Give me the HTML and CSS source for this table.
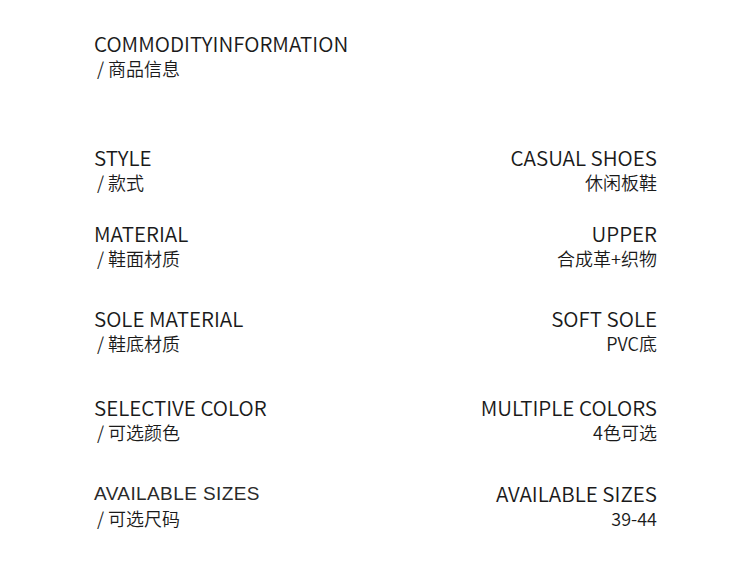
FILE: index.html
```html
<!DOCTYPE html>
<html>
<head>
<meta charset="utf-8">
<link rel="stylesheet" href="styles.css">
</head>
<body>
<div class="page">
  <header class="head">
    <div class="title">COMMODITYINFORMATION</div>
    <div class="sub">/ 商品信息</div>
  </header>
  <div class="rows">
    <div class="row r1">
      <div class="cell"><div class="title">STYLE</div><div class="sub">/ 款式</div></div>
      <div class="cell right"><div class="title">CASUAL SHOES</div><div class="sub">休闲板鞋</div></div>
    </div>
    <div class="row r2">
      <div class="cell"><div class="title">MATERIAL</div><div class="sub">/ 鞋面材质</div></div>
      <div class="cell right"><div class="title">UPPER</div><div class="sub">合成革+织物</div></div>
    </div>
    <div class="row r3">
      <div class="cell"><div class="title">SOLE MATERIAL</div><div class="sub">/ 鞋底材质</div></div>
      <div class="cell right"><div class="title">SOFT SOLE</div><div class="sub">PVC底</div></div>
    </div>
    <div class="row r4">
      <div class="cell"><div class="title">SELECTIVE COLOR</div><div class="sub">/ 可选颜色</div></div>
      <div class="cell right"><div class="title">MULTIPLE COLORS</div><div class="sub">4色可选</div></div>
    </div>
    <div class="row r5">
      <div class="cell"><div class="title alt">AVAILABLE SIZES</div><div class="sub">/ 可选尺码</div></div>
      <div class="cell right"><div class="title">AVAILABLE SIZES</div><div class="sub">39-44</div></div>
    </div>
  </div>
</div>
</body>
</html>
```

FILE: styles.css
```css
html, body {
  margin: 0;
  padding: 0;
  background: #ffffff;
}
.page {
  width: 750px;
  height: 571px;
  box-sizing: border-box;
  padding: 32px 93px 0 94px;
  font-family: "Noto Sans CJK SC", "Noto Sans", sans-serif;
  font-weight: 350;
  color: #1a1a1a;
}
.title {
  font-size: 20.6px;
  line-height: 22px;
  white-space: nowrap;
}
.sub {
  font-size: 18px;
  line-height: 22px;
  margin-top: 3px;
  padding-left: 3px;
  white-space: nowrap;
}
.right .sub {
  padding-left: 0;
}
.rows {
  display: flex;
  flex-direction: column;
}
.row {
  display: flex;
  justify-content: space-between;
}
.cell.right {
  text-align: right;
}
.r1 { margin-top: 67px; }
.r2 { margin-top: 29px; }
.r3 { margin-top: 38px; }
.r4 { margin-top: 42px; }
.r5 { margin-top: 39px; }
.title.alt {
  font-family: "Liberation Sans", sans-serif;
  font-weight: 400;
  font-size: 19px;
  line-height: 20px;
  padding-top: 2px;
  letter-spacing: 0.4px;
  color: #2a2a2a;
}
```
